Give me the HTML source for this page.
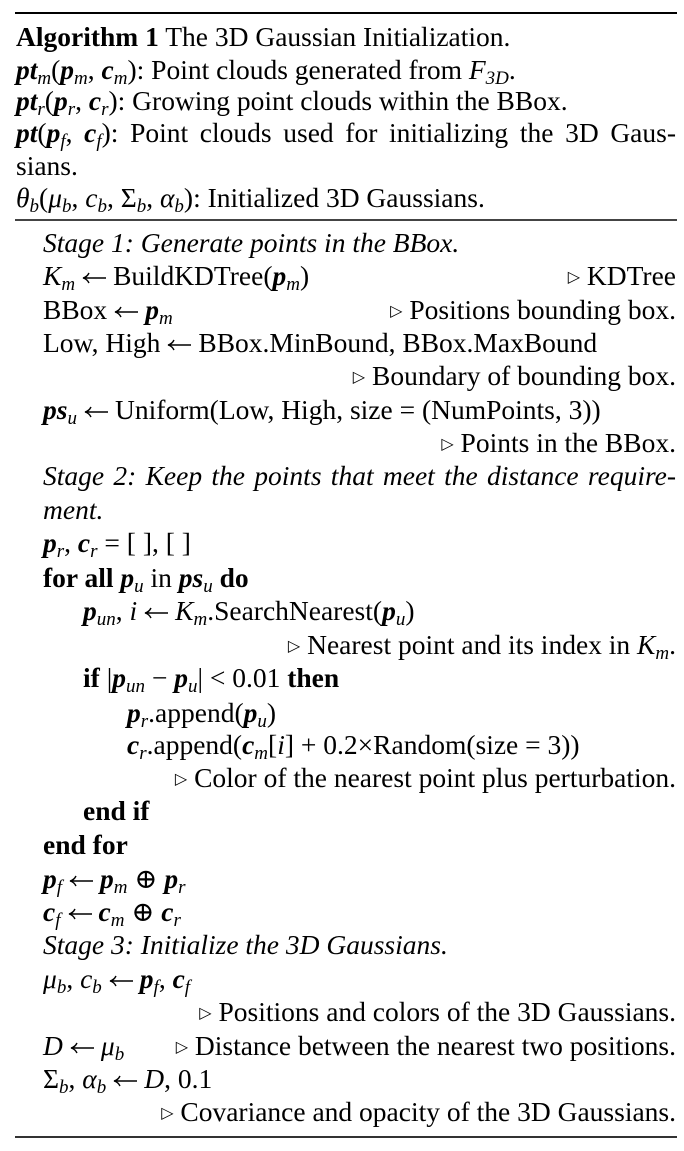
<!DOCTYPE html>
<html><head><meta charset="utf-8"><style>
html,body{margin:0;padding:0;background:#fff;width:684px;height:1151px;overflow:hidden}
body{position:relative;font-family:"Liberation Serif","DejaVu Serif",serif;font-size:27.5px;color:#000}
.l{position:absolute;white-space:nowrap;line-height:30px;height:30px}
.r{right:8px}
.rule{position:absolute;left:15px;width:662px;background:#000}
sub{font-size:19px;vertical-align:-5px;line-height:0;font-style:italic}
.t{font-size:16px;vertical-align:3px;font-family:"DejaVu Sans",sans-serif}
.a{display:inline-block;width:24px;height:12px;margin:0 7px;vertical-align:1px}
b i,i b{font-weight:bold;font-style:italic}
</style></head><body>
<svg width="0" height="0" style="position:absolute"><defs><symbol id="ar" viewBox="0 0 24 12"><path d="M1 6H24M7 1Q5 5 1 6Q5 7 7 11" fill="none" stroke="#000" stroke-width="1.4"/></symbol></defs></svg>
<div class="rule" style="top:12px;height:2px"></div>
<div class="rule" style="top:219px;height:1.5px;background:#444"></div>
<div class="rule" style="top:1136px;height:2px;background:#333"></div>

<div class="l" style="left:16px;top:22px"><b>Algorithm 1</b> The 3D Gaussian Initialization.</div>
<div class="l" style="left:16px;top:55px"><b><i>pt</i></b><sub>m</sub>(<b><i>p</i></b><sub>m</sub>, <b><i>c</i></b><sub>m</sub>): Point clouds generated from <i>F</i><sub>3D</sub>.</div>
<div class="l" style="left:16px;top:86px"><b><i>pt</i></b><sub>r</sub>(<b><i>p</i></b><sub>r</sub>, <b><i>c</i></b><sub>r</sub>): Growing point clouds within the BBox.</div>
<div class="l" style="left:16px;top:118px;width:660px;text-align:justify;text-align-last:justify"><b><i>pt</i></b>(<b><i>p</i></b><sub>f</sub>, <b><i>c</i></b><sub>f</sub>): Point clouds used for initializing the 3D Gaus-</div>
<div class="l" style="left:16px;top:151px">sians.</div>
<div class="l" style="left:16px;top:183px"><i>θ</i><sub>b</sub>(<i>μ</i><sub>b</sub>, <i>c</i><sub>b</sub>, Σ<sub>b</sub>, <i>α</i><sub>b</sub>): Initialized 3D Gaussians.</div>

<div class="l" style="left:43px;top:228px"><i>Stage 1: Generate points in the BBox.</i></div>
<div class="l" style="left:43px;top:261px"><i>K</i><sub>m</sub><svg class="a"><use href="#ar"/></svg>BuildKDTree(<b><i>p</i></b><sub>m</sub>)</div>
<div class="l r" style="top:261px"><span class="t">▷</span> KDTree</div>
<div class="l" style="left:43px;top:295px">BBox<svg class="a"><use href="#ar"/></svg><b><i>p</i></b><sub>m</sub></div>
<div class="l r" style="top:295px"><span class="t">▷</span> Positions bounding box.</div>
<div class="l" style="left:43px;top:328px">Low, High<svg class="a"><use href="#ar"/></svg>BBox.MinBound, BBox.MaxBound</div>
<div class="l r" style="top:361px"><span class="t">▷</span> Boundary of bounding box.</div>
<div class="l" style="left:43px;top:395px"><b><i>ps</i></b><sub>u</sub><svg class="a"><use href="#ar"/></svg>Uniform(Low, High, size = (NumPoints, 3))</div>
<div class="l r" style="top:428px"><span class="t">▷</span> Points in the BBox.</div>
<div class="l" style="left:43px;top:461px;width:633px;text-align:justify;text-align-last:justify"><i>Stage 2: Keep the points that meet the distance require-</i></div>
<div class="l" style="left:43px;top:495px"><i>ment.</i></div>
<div class="l" style="left:43px;top:528px"><b><i>p</i></b><sub>r</sub>, <b><i>c</i></b><sub>r</sub> = [ ], [ ]</div>
<div class="l" style="left:43px;top:563px"><b>for all</b> <b><i>p</i></b><sub>u</sub> in <b><i>ps</i></b><sub>u</sub> <b>do</b></div>
<div class="l" style="left:83px;top:596px"><b><i>p</i></b><sub>un</sub>, <i>i</i><svg class="a"><use href="#ar"/></svg><i>K</i><sub>m</sub>.SearchNearest(<b><i>p</i></b><sub>u</sub>)</div>
<div class="l r" style="top:630px"><span class="t">▷</span> Nearest point and its index in <i>K</i><sub>m</sub>.</div>
<div class="l" style="left:83px;top:663px"><b>if</b> |<b><i>p</i></b><sub>un</sub> − <b><i>p</i></b><sub>u</sub>| &lt; 0.01 <b>then</b></div>
<div class="l" style="left:127px;top:698px"><b><i>p</i></b><sub>r</sub>.append(<b><i>p</i></b><sub>u</sub>)</div>
<div class="l" style="left:127px;top:730px"><b><i>c</i></b><sub>r</sub>.append(<b><i>c</i></b><sub>m</sub>[<i>i</i>] + 0.2×Random(size = 3))</div>
<div class="l r" style="top:763px"><span class="t">▷</span> Color of the nearest point plus perturbation.</div>
<div class="l" style="left:83px;top:796px"><b>end if</b></div>
<div class="l" style="left:43px;top:830px"><b>end for</b></div>
<div class="l" style="left:43px;top:864px"><b><i>p</i></b><sub>f</sub><svg class="a"><use href="#ar"/></svg><b><i>p</i></b><sub>m</sub> ⊕ <b><i>p</i></b><sub>r</sub></div>
<div class="l" style="left:43px;top:897px"><b><i>c</i></b><sub>f</sub><svg class="a"><use href="#ar"/></svg><b><i>c</i></b><sub>m</sub> ⊕ <b><i>c</i></b><sub>r</sub></div>
<div class="l" style="left:43px;top:930px"><i>Stage 3: Initialize the 3D Gaussians.</i></div>
<div class="l" style="left:43px;top:964px"><i>μ</i><sub>b</sub>, <i>c</i><sub>b</sub><svg class="a"><use href="#ar"/></svg><b><i>p</i></b><sub>f</sub>, <b><i>c</i></b><sub>f</sub></div>
<div class="l r" style="top:997px"><span class="t">▷</span> Positions and colors of the 3D Gaussians.</div>
<div class="l" style="left:43px;top:1031px"><i>D</i><svg class="a"><use href="#ar"/></svg><i>μ</i><sub>b</sub></div>
<div class="l r" style="top:1031px"><span class="t">▷</span> Distance between the nearest two positions.</div>
<div class="l" style="left:43px;top:1064px">Σ<sub>b</sub>, <i>α</i><sub>b</sub><svg class="a"><use href="#ar"/></svg><i>D</i>, 0.1</div>
<div class="l r" style="top:1097px"><span class="t">▷</span> Covariance and opacity of the 3D Gaussians.</div>
</body></html>
